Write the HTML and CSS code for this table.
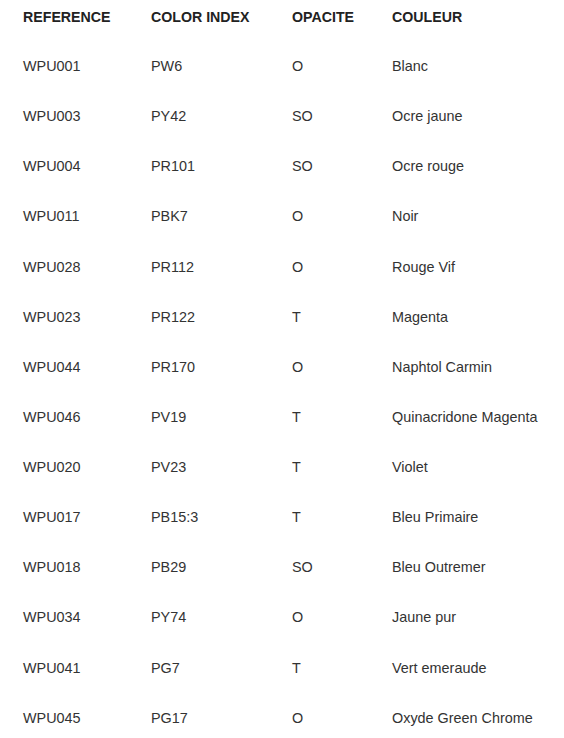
FILE: index.html
```html
<!DOCTYPE html>
<html lang="fr">
<head>
<meta charset="utf-8">
<title>Couleurs</title>
<link rel="stylesheet" href="styles.css">
</head>
<body>
<table class="colors">
  <thead>
    <tr><th class="c1">REFERENCE</th><th class="c2">COLOR INDEX</th><th class="c3">OPACITE</th><th class="c4">COULEUR</th></tr>
  </thead>
  <tbody>
    <tr><td>WPU001</td><td>PW6</td><td>O</td><td>Blanc</td></tr>
    <tr><td>WPU003</td><td>PY42</td><td>SO</td><td>Ocre jaune</td></tr>
    <tr><td>WPU004</td><td>PR101</td><td>SO</td><td>Ocre rouge</td></tr>
    <tr><td>WPU011</td><td>PBK7</td><td>O</td><td>Noir</td></tr>
    <tr><td>WPU028</td><td>PR112</td><td>O</td><td>Rouge Vif</td></tr>
    <tr><td>WPU023</td><td>PR122</td><td>T</td><td>Magenta</td></tr>
    <tr><td>WPU044</td><td>PR170</td><td>O</td><td>Naphtol Carmin</td></tr>
    <tr><td>WPU046</td><td>PV19</td><td>T</td><td>Quinacridone Magenta</td></tr>
    <tr><td>WPU020</td><td>PV23</td><td>T</td><td>Violet</td></tr>
    <tr><td>WPU017</td><td>PB15:3</td><td>T</td><td>Bleu Primaire</td></tr>
    <tr><td>WPU018</td><td>PB29</td><td>SO</td><td>Bleu Outremer</td></tr>
    <tr><td>WPU034</td><td>PY74</td><td>O</td><td>Jaune pur</td></tr>
    <tr><td>WPU041</td><td>PG7</td><td>T</td><td>Vert emeraude</td></tr>
    <tr><td>WPU045</td><td>PG17</td><td>O</td><td>Oxyde Green Chrome</td></tr>
  </tbody>
</table>
</body>
</html>
```
FILE: styles.css
```css
html, body {
  margin: 0;
  padding: 0;
  background: #fff;
}
body {
  font-family: "Liberation Sans", Arial, sans-serif;
  font-size: 14.4px;
  color: #333;
}
.colors {
  border-collapse: collapse;
  margin-left: 23px;
  table-layout: fixed;
  width: 541px;
}
.colors th {
  text-align: left;
  font-weight: bold;
  font-size: 14.2px;
  line-height: 20px;
  padding: 7px 0 14px;
  color: #222;
}
.colors td {
  line-height: 20.12px;
  padding: 15px 0;
  vertical-align: top;
}
.c1 { width: 128px; }
.c2 { width: 141px; }
.c3 { width: 100px; }
```
